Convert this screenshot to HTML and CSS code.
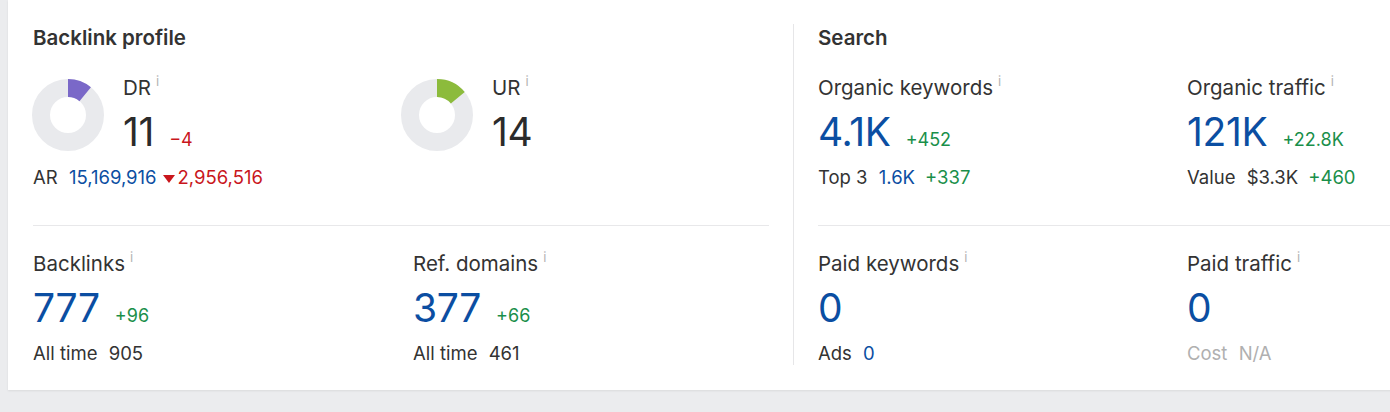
FILE: index.html
```html
<!DOCTYPE html>
<html lang="en">
<head>
  <meta charset="UTF-8" />
  <title>Overview</title>
  <link rel="stylesheet" href="styles.css">
</head>
<body>

  <div class="card">

    <!-- Backlink profile -->
    <section class="panel panel-left">
      <h3>Backlink profile</h3>
      <div class="row row-top">
        <div class="metric metric-rank">
          <div class="rank-head">
            <svg class="donut" width="72" height="72" viewBox="0 0 72 72">
              <circle cx="36" cy="36" r="27" fill="none" stroke="#e9eaed" stroke-width="18" />
              <circle cx="36" cy="36" r="27" fill="none" stroke="#7a68c8" stroke-width="18"
                      pathLength="100" stroke-dasharray="11 100" transform="rotate(-90 36 36)" />
            </svg>
            <div>
              <div class="label">DR<span class="info">i</span></div>
              <div class="value dark">11<span class="delta down">&minus;4</span></div>
            </div>
          </div>
          <div class="sub">AR <span class="blue">15,169,916</span><span class="drop"><span class="arrow"></span>2,956,516</span></div>
        </div>
        <div class="metric metric-rank">
          <div class="rank-head">
            <svg class="donut" width="72" height="72" viewBox="0 0 72 72">
              <circle cx="36" cy="36" r="27" fill="none" stroke="#e9eaed" stroke-width="18" />
              <circle cx="36" cy="36" r="27" fill="none" stroke="#8cbb3c" stroke-width="18"
                      pathLength="100" stroke-dasharray="14 100" transform="rotate(-90 36 36)" />
            </svg>
            <div>
              <div class="label">UR<span class="info">i</span></div>
              <div class="value dark">14</div>
            </div>
          </div>
        </div>
      </div>
      <hr>
      <div class="row row-bottom">
        <div class="metric metric-wide">
          <div class="label">Backlinks<span class="info">i</span></div>
          <div class="value">777<span class="delta up">+96</span></div>
          <div class="sub">All time <span>905</span></div>
        </div>
        <div class="metric metric-wide">
          <div class="label">Ref. domains<span class="info">i</span></div>
          <div class="value">377<span class="delta up">+66</span></div>
          <div class="sub">All time <span>461</span></div>
        </div>
      </div>
    </section>

    <!-- Search -->
    <section class="panel panel-right">
      <h3>Search</h3>
      <div class="row row-top">
        <div class="metric">
          <div class="label">Organic keywords<span class="info">i</span></div>
          <div class="value">4.1K<span class="delta up">+452</span></div>
          <div class="sub">Top 3 <span class="blue">1.6K</span><span class="up">+337</span></div>
        </div>
        <div class="metric">
          <div class="label">Organic traffic<span class="info">i</span></div>
          <div class="value">121K<span class="delta up">+22.8K</span></div>
          <div class="sub">Value <span>$3.3K</span><span class="up">+460</span></div>
        </div>
      </div>
      <hr>
      <div class="row row-bottom">
        <div class="metric">
          <div class="label">Paid keywords<span class="info">i</span></div>
          <div class="value">0</div>
          <div class="sub">Ads <span class="blue">0</span></div>
        </div>
        <div class="metric">
          <div class="label">Paid traffic<span class="info">i</span></div>
          <div class="value">0</div>
          <div class="sub muted">Cost <span>N/A</span></div>
        </div>
      </div>
    </section>

  </div>

</body>
</html>
```

FILE: styles.css
```css
* {
  box-sizing: border-box;
  margin: 0;
  padding: 0;
  font-family: 'Inter', 'Noto Sans', sans-serif;
}

body {
  background: #ebecee;
  color: #333;
  overflow: hidden;
  width: 1390px;
  height: 412px;
}

.card {
  margin-left: 8px;
  width: 1600px;
  background: #fff;
  display: flex;
  padding: 24px 0 25px;
  box-shadow: 0 1px 2px rgba(0, 0, 0, 0.08);
}

.panel {
  flex: none;
}

.panel-left {
  padding: 0 24px 0 25px;
  width: 786px;
  border-right: 1px solid #e6e6e8;
}

.panel-right {
  padding-left: 24px;
  width: 760px;
}

h3 {
  font-size: 20.5px;
  font-weight: 600;
  line-height: 28px;
  color: #333;
  margin-bottom: 24px;
}

.row {
  display: flex;
}

.metric {
  width: 369px;
  flex: none;
}

.metric-wide {
  width: 380px;
}

.rank-head {
  display: flex;
  align-items: center;
  gap: 19px;
}

.donut {
  display: block;
  margin-left: -1px;
}

.label {
  font-size: 20.5px;
  line-height: 24px;
  color: #333;
}

.info {
  font-size: 13px;
  line-height: 0;
  color: #b3b3b3;
  margin-left: 5px;
  vertical-align: 9px;
}

.value {
  font-size: 39px;
  line-height: 44px;
  margin-top: 10px;
  color: #0b4ea2;
  letter-spacing: -0.3px;
}

.value.dark {
  color: #2b2b2b;
}

.delta {
  font-size: 18px;
  line-height: 0;
  letter-spacing: 0;
  margin-left: 15px;
}

.up {
  color: #1a8f4a;
}

.down {
  color: #c9161c;
}

.blue {
  color: #0b4ea2;
}

.sub {
  font-size: 18.5px;
  line-height: 24px;
  margin-top: 11px;
  color: #333;
}

.sub span {
  margin-left: 6px;
}

.sub .up {
  margin-left: 10px;
}

.sub.muted {
  color: #b0b0b0;
}

.drop {
  color: #c9161c;
  margin-left: 10px;
}

.arrow {
  display: inline-block;
  width: 0;
  height: 0;
  border-left: 6px solid transparent;
  border-right: 6px solid transparent;
  border-top: 8px solid #c9161c;
  margin: 0 3px 1px 0 !important;
}

hr {
  border: none;
  border-top: 1px solid #e8e8ea;
  margin: 36px 0 26px;
}

.panel-right hr {
  margin-right: -40px;
}
```
